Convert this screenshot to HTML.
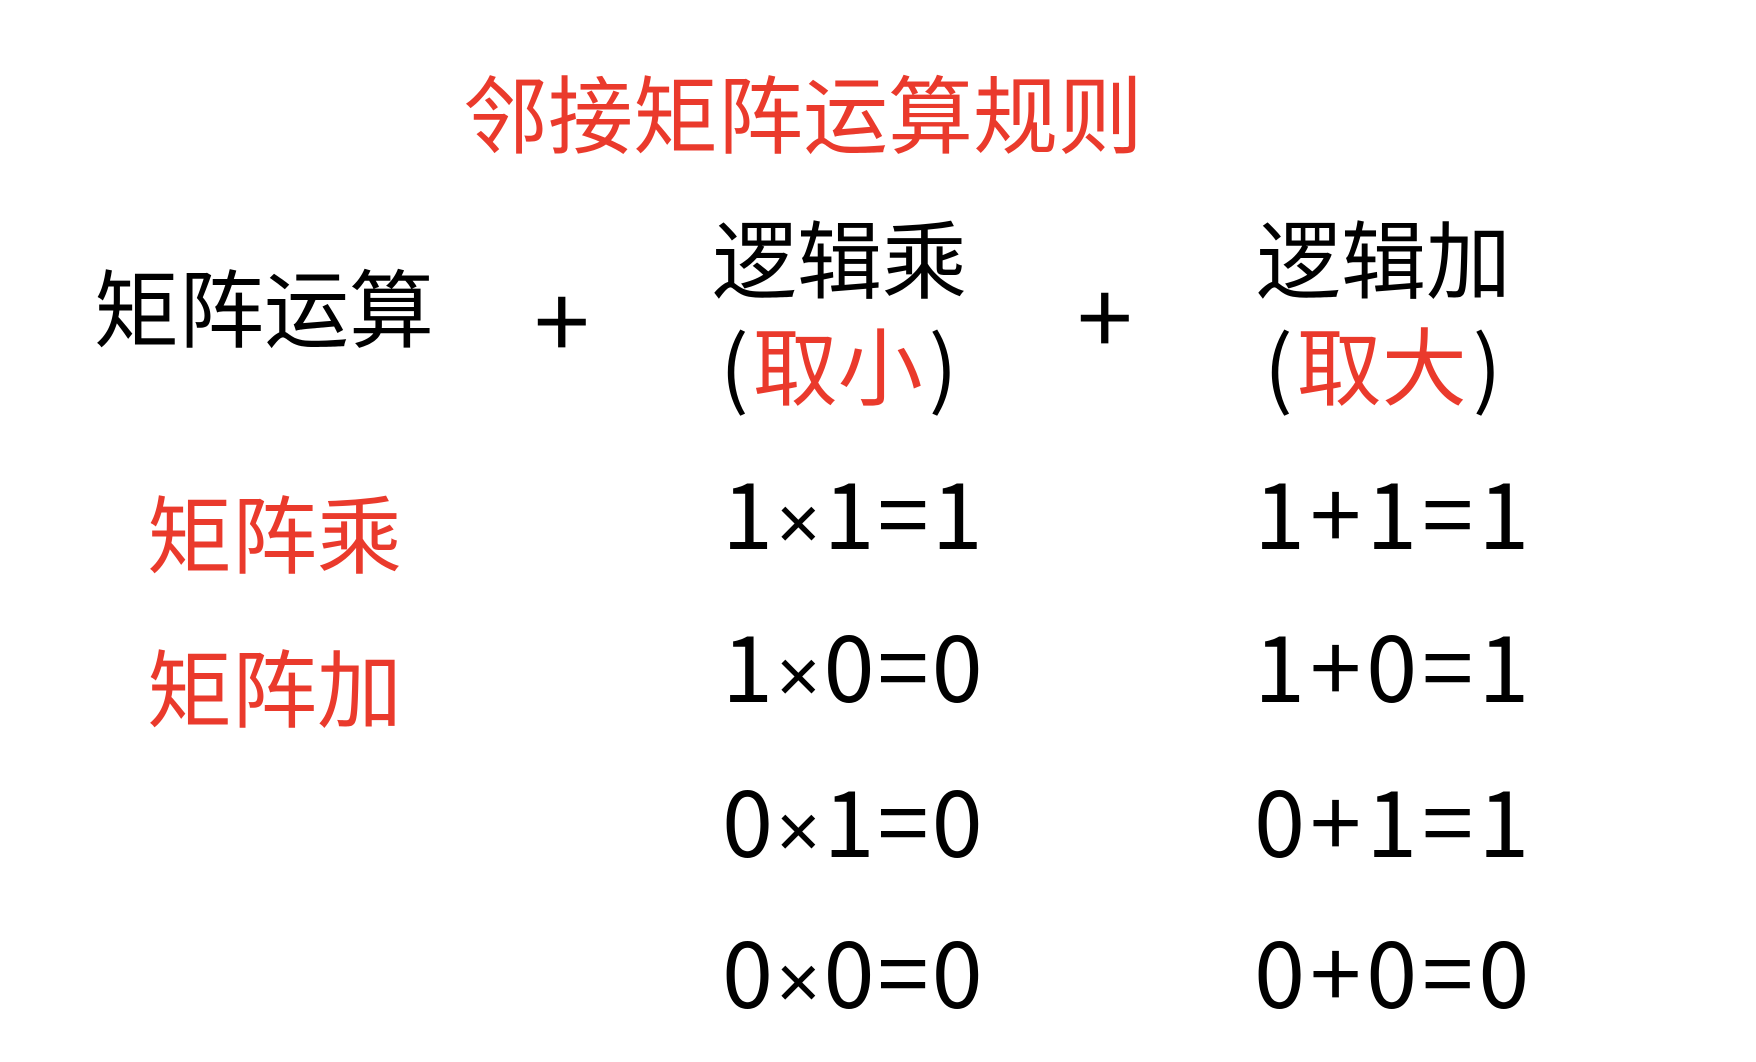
<!DOCTYPE html>
<html><head><meta charset="utf-8"><style>
body{margin:0;width:1756px;height:1062px;background:#fff;overflow:hidden;position:relative;font-family:"Liberation Sans","Noto Sans CJK SC",sans-serif;}
.t{position:absolute;white-space:nowrap;line-height:1;font-family:"Noto Sans CJK SC",sans-serif;}
.r{color:#ea3a2c}
.k{color:#000}
.e{font-size:92px;color:#000;letter-spacing:3px}
.x{font-family:"Liberation Sans",sans-serif;font-size:76px;margin:0 0px}
</style></head><body>
<div class="t r" style="left:463px;top:68px;font-size:85px;">邻接矩阵运算规则</div>
<div class="t k" style="left:94px;top:262px;font-size:85px;">矩阵运算</div>
<div class="t k" style="left:534px;top:266px;font-size:100px;">+</div>
<div class="t k" style="left:712px;top:213px;font-size:85px;">逻辑乘</div>
<div class="t k" style="left:720px;top:320px;font-size:85px;">(<span class="r" style="margin:0 6px 0 4px">取小</span>)</div>
<div class="t k" style="left:1077px;top:262px;font-size:100px;">+</div>
<div class="t k" style="left:1256px;top:213px;font-size:85px;">逻辑加</div>
<div class="t k" style="left:1264px;top:320px;font-size:85px;">(<span class="r" style="margin:0 6px 0 4px">取大</span>)</div>
<div class="t r" style="left:147px;top:488px;font-size:85px;">矩阵乘</div>
<div class="t r" style="left:147px;top:642px;font-size:85px;">矩阵加</div>
<div class="t e" style="left:722px;top:464px;">1<span class="x">×</span>1=1</div>
<div class="t e" style="left:722px;top:617px;">1<span class="x">×</span>0=0</div>
<div class="t e" style="left:722px;top:772px;">0<span class="x">×</span>1=0</div>
<div class="t e" style="left:722px;top:923px;">0<span class="x">×</span>0=0</div>
<div class="t e" style="left:1254px;top:464px;letter-spacing:5px">1+1=1</div>
<div class="t e" style="left:1254px;top:617px;letter-spacing:5px">1+0=1</div>
<div class="t e" style="left:1254px;top:772px;letter-spacing:5px">0+1=1</div>
<div class="t e" style="left:1254px;top:923px;letter-spacing:5px">0+0=0</div>
</body></html>
